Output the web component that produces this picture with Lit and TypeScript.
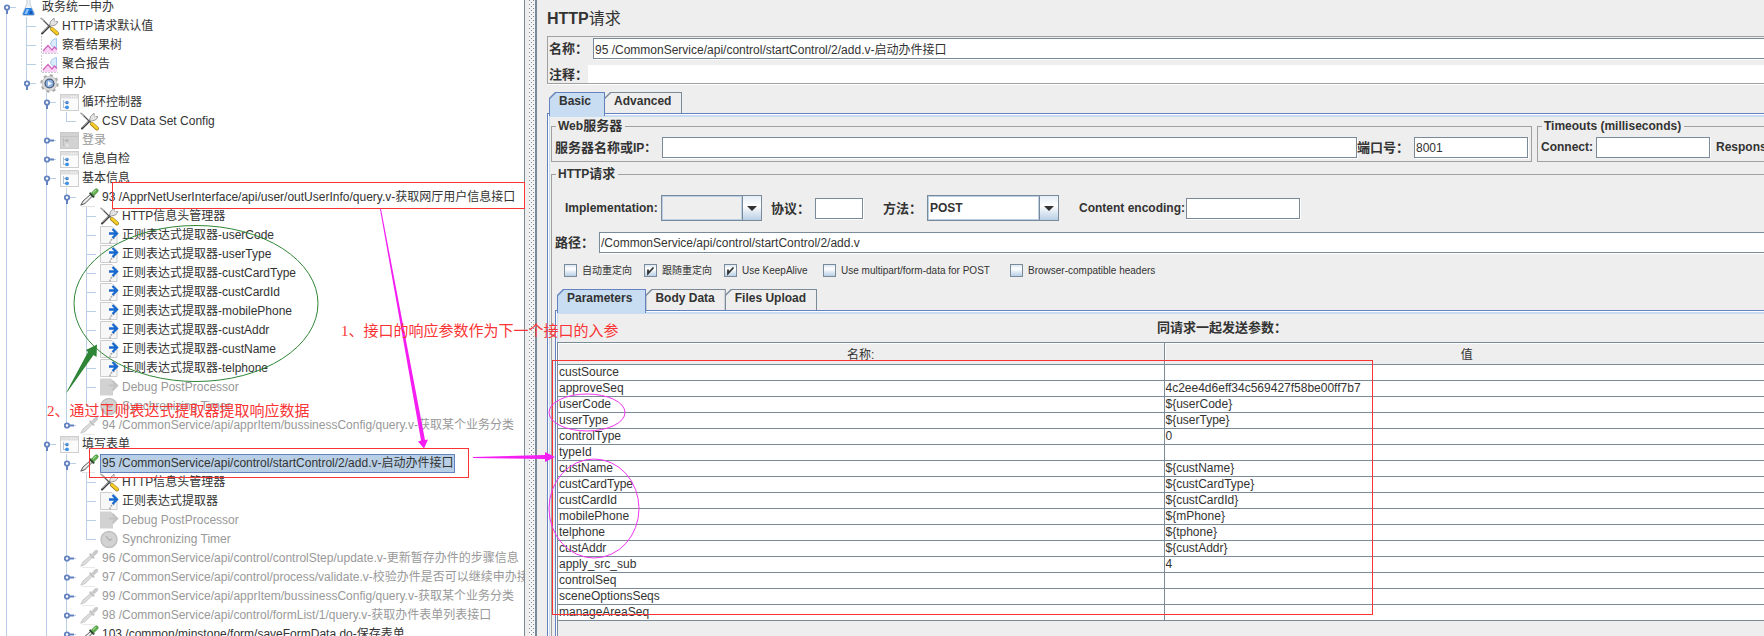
import { LitElement, html, css, svg, nothing } from "lit";
import { customElement, property, state } from "lit/decorators.js";
import { classMap } from "lit/directives/class-map.js";

type IconName = "flask" | "tools" | "graph" | "gear" | "controller" | "dropper" | "extract" | "timer";

interface Node {
  level: number;
  icon: IconName;
  text: string;
  open?: boolean;
  off?: boolean;
  last?: boolean;
  selected?: boolean;
}

const EXTRACT = "正则表达式提取器";

const NODES: Node[] = [
  { level: 0, icon: "flask", text: "政务统一申办", open: true },
  { level: 1, icon: "tools", text: "HTTP请求默认值" },
  { level: 1, icon: "graph", text: "察看结果树" },
  { level: 1, icon: "graph", text: "聚合报告" },
  { level: 1, icon: "gear", text: "申办", open: true, last: true },
  { level: 2, icon: "controller", text: "循环控制器", open: true },
  { level: 3, icon: "tools", text: "CSV Data Set Config", last: true },
  { level: 2, icon: "controller", text: "登录", open: false, off: true },
  { level: 2, icon: "controller", text: "信息自检", open: false },
  { level: 2, icon: "controller", text: "基本信息", open: true },
  { level: 3, icon: "dropper", text: "93 /ApprNetUserInterface/api/user/outUserInfo/query.v-获取网厅用户信息接口", open: true },
  { level: 4, icon: "tools", text: "HTTP信息头管理器" },
  ...["userCode", "userType", "custCardType", "custCardId", "mobilePhone", "custAddr", "custName", "telphone"].map(
    (n): Node => ({ level: 4, icon: "extract", text: `${EXTRACT}-${n}` }),
  ),
  { level: 4, icon: "extract", text: "Debug PostProcessor", off: true },
  { level: 4, icon: "timer", text: "Synchronizing Timer", off: true, last: true },
  { level: 3, icon: "dropper", text: "94 /CommonService/api/apprItem/bussinessConfig/query.v-获取某个业务分类", open: false, off: true, last: true },
  { level: 2, icon: "controller", text: "填写表单", open: true },
  { level: 3, icon: "dropper", text: "95 /CommonService/api/control/startControl/2/add.v-启动办件接口", open: true, selected: true },
  { level: 4, icon: "tools", text: "HTTP信息头管理器" },
  { level: 4, icon: "extract", text: EXTRACT },
  { level: 4, icon: "extract", text: "Debug PostProcessor", off: true },
  { level: 4, icon: "timer", text: "Synchronizing Timer", off: true, last: true },
  { level: 3, icon: "dropper", text: "96 /CommonService/api/control/controlStep/update.v-更新暂存办件的步骤信息", open: false, off: true },
  { level: 3, icon: "dropper", text: "97 /CommonService/api/control/process/validate.v-校验办件是否可以继续申办接口", open: false, off: true },
  { level: 3, icon: "dropper", text: "99 /CommonService/api/apprItem/bussinessConfig/query.v-获取某个业务分类", open: false, off: true },
  { level: 3, icon: "dropper", text: "98 /CommonService/api/control/formList/1/query.v-获取办件表单列表接口", open: false, off: true },
  { level: 3, icon: "dropper", text: "103 /common/minstone/form/saveFormData.do-保存表单", open: false },
];

const PARAMS: [string, string][] = [
  ["custSource", ""],
  ["approveSeq", "4c2ee4d6eff34c569427f58be00ff7b7"],
  ["userCode", "${userCode}"],
  ["userType", "${userType}"],
  ["controlType", "0"],
  ["typeId", ""],
  ["custName", "${custName}"],
  ["custCardType", "${custCardType}"],
  ["custCardId", "${custCardId}"],
  ["mobilePhone", "${mPhone}"],
  ["telphone", "${tphone}"],
  ["custAddr", "${custAddr}"],
  ["apply_src_sub", "4"],
  ["controlSeq", ""],
  ["sceneOptionsSeqs", ""],
  ["manageAreaSeq", ""],
];

const ICONS: Record<IconName, unknown> = {
  flask: svg`
    <path d="M6 0h5v1H10V6l4.500 9.500q.5 2-1.500 2H4q-2 0-1.500-2L7 6V1H6z" fill="#eef3f8" stroke="#b9c2cc" stroke-width=".8"/>
    <path d="M5.500 10h6l2.500 5.500q.3 1.500-1 1.500H4q-1.300 0-1-1.500z" fill="#2a7fe0"/>
    <path d="M6.500 11h2.500l-2 5H4.500z" fill="#8ec4fa"/>
    <circle cx="11" cy="14.500" r="1.500" fill="#1353b0"/>`,
  tools: svg`
    <path d="M2 16.500 10 8.500" stroke="#3a3a3a" stroke-width="2" stroke-linecap="round"/>
    <path d="M2.500 15.500 10 8" stroke="#a8a8a8" stroke-width=".8"/>
    <path d="M9.500 9 10.500 4.500 14 1.200l.5 3 3.500.6-2.500 3.200-4 1z" fill="#e4e4e4" stroke="#777" stroke-width=".7"/>
    <path d="M14.800 4.200 18 1" stroke="#fff" stroke-width="1.400"/>
    <path d="M3 3 10.500 10.500" stroke="#555" stroke-width="1.300"/>
    <path d="M.5.800 4.500 4" stroke="#a5a5a5" stroke-width="1.600"/>
    <path d="M12 12 17 16.500" stroke="#9a7a10" stroke-width="3.800" stroke-linecap="round"/>
    <path d="M12 11.800 17 16.300" stroke="#f7cd2a" stroke-width="2.600" stroke-linecap="round"/>`,
  graph: svg`
    <path d="M3 15 8 9.500l4 4.500 2.500-3.500 2.500 3V17H3z" fill="#f9d3f3"/>
    <path d="M10.500 8q.5-4.500 6-5.500V12q-5-.5-6-4z" fill="#dcebfb" stroke="#8fbbe8" stroke-width=".8"/>
    <path d="M3 15 8 9.500l4 4.500 2.500-3 2.500 2.500" fill="none" stroke="#cf63bf" stroke-width="1.200"/>
    <path d="M1.500 0v17.500H18" fill="none" stroke="#c9c9d2" stroke-dasharray="2 1"/>`,
  gear: svg`
    <circle cx="9.500" cy="9.500" r="8" fill="none" stroke="#a9a9a9" stroke-width="2.400" stroke-dasharray="3.140 3.143"/>
    <circle cx="9.500" cy="9.500" r="7.300" fill="#dedede" stroke="#b4b4b4" stroke-width=".7"/>
    <circle cx="9.500" cy="9.500" r="4.400" fill="#8fb2dd" stroke="#4a5f80" stroke-width="1.400"/>
    <path d="M8 7v5l4-2.500z" fill="#f4f9ff"/>`,
  controller: svg`
    <rect x=".5" y="1.500" width="18" height="16" fill="#fbfbfb" stroke="#cfcfcf"/>
    <rect x="1" y="2" width="17" height="3.500" fill="#dfdfdf"/>
    <path d="M11 3.500h6" stroke="#f8f8f8" stroke-dasharray="1 1"/>
    <path d="M3.500 7v8M3.500 9.500h3M3.500 14.500h3" fill="none" stroke="#b1c2d3"/>
    <circle cx="7" cy="9.500" r="1.700" fill="#2f72bd"/><circle cx="7" cy="14.300" r="1.900" fill="#3b92e8"/>
    <path d="M5.500 9h3" stroke="#8cc1f5"/>`,
  dropper: svg`
    <path d="M2 18.500h13" stroke="#e2e2e2"/>
    <path d="M.8 17.200 3 13l7.500-6.500 1.800 1.800L5 15.500z" fill="#dedede" stroke="#5a5a5a" stroke-linejoin="round"/>
    <path d="M3.500 14.500 10.500 8" stroke="#fafafa"/>
    <path d="M10.300 5.500 13.500 8.700" stroke="#2e4a2e" stroke-width="2.200" stroke-linecap="round"/>
    <path d="M11.500 5 15 1.300q1.700-1 2.700 0t0 2.700L14 7.500z" fill="#62b052" stroke="#3c8a34" stroke-width=".7"/>
    <path d="M13 4.700 16 2" stroke="#b0e4a2"/>`,
  extract: svg`
    <path d="M.5 .5H12l5 5v12H.5z" fill="#f7f7f7" stroke="#cdcdcd"/>
    <path d="M10 17.500q0-4 4.500-5.500" fill="none" stroke="#aaa" stroke-width="1.600" stroke-dasharray="2 1"/>
    <path d="M9 7.500h8M12.500 3l4.500 4.500-4.500 4.500" fill="none" stroke="#1769cf" stroke-width="2.300"/>`,
  timer: svg`
    <circle cx="9" cy="9.500" r="8" fill="#f1f1f1" stroke="#888" stroke-width="1.200"/>
    <path d="M6 6 9.500 10.500 12 9" fill="none" stroke="#555" stroke-width="1.200"/>`,
};

const DISABLED: Partial<Record<IconName, unknown>> = {
  extract: svg`<path d="M0 .5h11l2 2 5.500 5-5.500 6v4H0z" fill="#d2d2d2"/><path d="M9 7.500h8M12.500 3l4.500 4.500-4.500 4.500" fill="none" stroke="#c2c2c2" stroke-width="2"/>`,
  controller: svg`
    <rect x=".5" y="1.500" width="18" height="16" fill="#d2d2d2" stroke="#c9c9c9"/>
    <path d="M1 5.500h17" stroke="#c4c4c4"/>
    <path d="M3.500 7v8M3.500 9.500h3M3.500 14.500h3" fill="none" stroke="#bcbcbc"/>
    <circle cx="7" cy="9.500" r="1.500" fill="#b6b6b6"/><circle cx="7" cy="14.300" r="1.700" fill="#e2e2e2"/>`,
  timer: svg`
    <circle cx="9" cy="9.500" r="8" fill="#d2d2d2" stroke="#c0c0c0" stroke-width="1.500"/>
    <path d="M6 6 9.500 10.500 12 9" fill="none" stroke="#adadad" stroke-width="1.200"/>`,
  dropper: svg`
    <path d="M2 18.500h13" stroke="#eaeaea"/>
    <path d="M.8 17.200 3 13l7.500-6.500 1.800 1.800L5 15.500z" fill="#dcdcdc" stroke="#c8c8c8" stroke-linejoin="round"/>
    <path d="M10.300 5.500 13.500 8.700" stroke="#c2c2c2" stroke-width="2.200" stroke-linecap="round"/>
    <path d="M11.500 5 15 1.300q1.700-1 2.700 0t0 2.700L14 7.500z" fill="#cacaca"/>`,
};

@customElement("plan-tree")
class PlanTree extends LitElement {
  static styles = css`
    :host { display: block; overflow: hidden; background: #fff; }
    .tree { margin: -2px 0 0; padding: 0; list-style: none; }
    .row { display: flex; height: 19px; align-items: center; white-space: nowrap; }
    .cell { flex: none; width: 20px; height: 19px; display: block; }
    .label { flex: none; height: 17px; line-height: 17px; padding: 0 1px 0 1px; border: 1px solid transparent; color: #333; }
    .off { color: #999; }
    .selected { background: #b8cfe5; border-color: #6382bf; }
  `;

  private connector(node: Node, index: number) {
    const leaf = node.open === undefined;
    const top = index === 0 ? 9 : 0;
    const bottom = node.last ? 10 : 19;
    return html`<svg class="cell" viewBox="0 0 20 19" aria-hidden="true">
      <rect x="6" y=${top} width="1" height=${bottom - top} fill="#b8cfe5"></rect>
      <rect x="6" y="9" width="10" height="1" fill="#b8cfe5"></rect>
      ${leaf
        ? nothing
        : svg`<circle cx="7" cy="9.500" r="2.200" fill="#fff" stroke="#6382bf" stroke-width="1.800"/>
            ${node.open
              ? svg`<rect x="6" y="12" width="2" height="4" fill="#6382bf"/>`
              : svg`<rect x="9" y="8.500" width="5" height="2" fill="#6382bf"/>`}`}
    </svg>`;
  }

  render() {
    const running: boolean[] = [];
    return html`<ul class="tree" role="tree">
      ${NODES.map((node, index) => {
        running[node.level] = !node.last;
        return html`<li class="row" role="treeitem" aria-level=${node.level + 1}>
          ${running.slice(0, node.level).map(
            (on) => html`<svg class="cell" viewBox="0 0 20 19" aria-hidden="true">
              ${on ? svg`<rect x="6" width="1" height="19" fill="#b8cfe5"/>` : nothing}
            </svg>`,
          )}
          ${this.connector(node, index)}
          <svg class="cell" viewBox="0 0 20 19" aria-hidden="true">
            ${(node.off && DISABLED[node.icon]) || ICONS[node.icon]}
          </svg>
          <span class=${classMap({ label: true, off: !!node.off, selected: !!node.selected })}>${node.text}</span>
        </li>`;
      })}
    </ul>`;
  }
}

@customElement("tab-strip")
class TabStrip extends LitElement {
  @property({ attribute: false }) tabs: string[] = [];
  @state() private active = 0;

  static styles = css`
    :host { display: block; }
    .strip { display: flex; padding-left: 2px; height: 21px; }
    .tab {
      position: relative; z-index: 0; height: 21px; margin: 0 -1px 0 0; padding: 0 11px 2px 10px; border: 0;
      background: #7a8a99; color: #333; font: bold 12px/19px "Liberation Sans", "Noto Sans CJK SC", sans-serif;
      clip-path: polygon(6px 0, 100% 0, 100% 100%, 0 100%, 0 6px);
    }
    .tab::before {
      content: ""; position: absolute; z-index: -1; inset: 1px 1px 0 1px; background: #eee;
      clip-path: polygon(6px 0, 100% 0, 100% 100%, 0 100%, 0 6px);
    }
    .active { z-index: 1; height: 24px; padding-right: 14px; padding-bottom: 5px; background: #6382bf; }
    .active::before { background: #c8ddf2; }
  `;

  render() {
    return html`<div class="strip" role="tablist">
      ${this.tabs.map(
        (tab, i) => html`<button
          class=${classMap({ tab: true, active: i === this.active })}
          role="tab"
          aria-selected=${i === this.active}
          @click=${() => (this.active = i)}
        >${tab}</button>`,
      )}
    </div>`;
  }
}

@customElement("request-form")
class RequestForm extends LitElement {
  static styles = css`
    :host { display: block; overflow: hidden; background: #eee; color: #333; }
    * { box-sizing: border-box; }
    .page { display: flex; flex-direction: column; height: calc(100% + 12px); margin: 0 -8px 0 10px; }
    .title { margin: 0; padding-top: 2px; font-size: 16px; line-height: 34px; font-weight: bold; }
    .title .cjk { font-weight: 400; font-size: 16px; }
    .names { border: 1px solid #a0a0a0; padding: 1px 0 0 1px; box-shadow: 0 1px #fff; }
    .line { display: flex; align-items: center; }
    .names .line + .line { margin-top: 6px; }
    label, legend, .caption { font-weight: bold; white-space: nowrap; }
    .cjk { font-size: 13px; }
    label { flex: none; line-height: 17px; }
    input, select, .combo { font: 12px "Liberation Sans", "Noto Sans CJK SC", sans-serif; color: #333; border-radius: 0; margin: 0; }
    .box { flex: none; height: 21px; min-width: 0; padding: 0 1px; border: 1px solid #7a8a99; background: #fff; outline: 0; box-shadow: 1px 1px #fff; }
    .plain { height: 18px; border: 0; box-shadow: none; }
    .grow { flex: 1; }
    .w39 { width: 39px; }
    .w44 { width: 44px; }
    .w55 { width: 55px; }
    .w57 { width: 57px; }
    .w96 { width: 96px; }
    .w107 { width: 107px; }
    .short { width: 48px; }
    .medium { width: 114px; }
    .tabs { margin-top: 8px; }
    .panel {
      flex: 1; display: flex; flex-direction: column; min-height: 0; border: 1px solid #6382bf; padding: 5px 0 0 3px;
      box-shadow: inset 1px 1px #fff, inset 2px 3px #c8ddf2;
    }
    fieldset { min-width: 0; margin: 0; border: 1px solid #a0a0a0; padding: 4px 3px 3px 3px; }
    legend { height: 14px; line-height: 14px; margin-left: 1px; padding: 0 3px 0 2px; }
    .servers { display: flex; gap: 5px; }
    .timeouts { flex: 0 0 234px; }
    .timeouts .line { overflow: hidden; }
    .after { margin-left: 6px; }
    .http { flex: 1; display: flex; flex-direction: column; margin-top: 5px; padding: 14px 0 0 3px; min-height: 0; }
    .options { padding-left: 10px; }
    .gap8 { margin-left: 9px; }
    .gap20 { margin-left: 20px; }
    .combo { display: flex; width: 101px; height: 26px; border: 1px solid #7a8a99; }
    .method { width: 132px; }
    .combo select { flex: 1; min-width: 0; appearance: none; padding: 0 1px; border: 1px solid #b8cfe5; background: #eee; font-weight: bold; outline: 0; }
    .method select { background: #fff; }
    .arrow { display: flex; align-items: center; justify-content: center; width: 19px; border-left: 1px solid #7a8a99; background: linear-gradient(#e4edf7, #fff 40%, #b8cfe5); }
    .path { margin-top: 11px; }
    .checks { margin: 11px 0 12px; padding-left: 9px; height: 13px; }
    .check { display: flex; align-items: center; gap: 5px; font-weight: 400; font-size: 10px; line-height: 13px; }
    .check input {
      appearance: none; width: 13px; height: 13px; border: 1px solid #7a8a99;
      background: linear-gradient(#dbe7f3, #fff 35%, #b8cfe5);
    }
    .check input:checked {
      background: url("data:image/svg+xml,%3Csvg xmlns='http://www.w3.org/2000/svg' viewBox='0 0 11 11'%3E%3Cpath d='M3 4.500v4L8.500 2.500' fill='none' stroke='%23333' stroke-width='1.800'/%3E%3C/svg%3E"),
        linear-gradient(#dbe7f3, #fff 35%, #b8cfe5);
    }
    .c80 { width: 80px; }
    .c99 { width: 99px; }
    .c187 { width: 187px; }
    .inner { padding: 3px 0 0 1px; }
    .caption { height: 28px; line-height: 28px; padding-left: 118px; text-align: center; }
    .grid { flex: 1; border-left: 1px solid #7a8a99; }
    table { width: 100%; table-layout: fixed; border-collapse: separate; border-spacing: 0; border-top: 1px solid #7a8a99; background: #fff; }
    th { height: 22px; padding: 0; font-weight: 400; background: #eee; box-shadow: inset 1px 1px #fff; border-bottom: 1px solid #7a8a99; }
    td { height: 16px; padding: 0 1px; line-height: 15px; border-bottom: 1px solid #7a8a99; white-space: nowrap; }
    th + th, td + td { border-left: 1px solid #7a8a99; }
  `;

  private check(id: string, text: string, on: boolean, size: string) {
    return html`<label class="check ${size}" for=${id}><input type="checkbox" id=${id} .checked=${on} />${text}</label>`;
  }

  private arrow() {
    return html`<span class="arrow"><svg width="10" height="5" aria-hidden="true"><path d="M0 0h10L5 5z" fill="#333"></path></svg></span>`;
  }

  render() {
    return html`<div class="page">
      <h1 class="title">HTTP<span class="cjk">请求</span></h1>
      <div class="names">
        <div class="line">
          <label class="cjk w44" for="name">名称：</label>
          <input class="box grow" id="name" .value=${"95 /CommonService/api/control/startControl/2/add.v-启动办件接口"} />
        </div>
        <div class="line">
          <label class="cjk w39" for="note">注释：</label>
          <input class="box plain grow" id="note" />
        </div>
      </div>
      <tab-strip class="tabs" .tabs=${["Basic", "Advanced"]}></tab-strip>
      <div class="panel">
        <div class="servers">
          <fieldset class="grow">
            <legend>Web<span class="cjk">服务器</span></legend>
            <div class="line">
              <label class="w107" for="host"><span class="cjk">服务器名称或</span>IP：</label>
              <input class="box grow" id="host" />
              <label class="cjk w57" for="port">端口号：</label>
              <input class="box medium" id="port" .value=${"8001"} />
            </div>
          </fieldset>
          <fieldset class="timeouts">
            <legend>Timeouts (milliseconds)</legend>
            <div class="line">
              <label class="w55" for="connect">Connect:</label>
              <input class="box medium" id="connect" />
              <span class="after"><label>Response:</label></span>
            </div>
          </fieldset>
        </div>
        <fieldset class="http">
          <legend>HTTP<span class="cjk">请求</span></legend>
          <div class="line options">
            <label class="w96" for="impl">Implementation:</label>
            <div class="combo"><select id="impl"><option></option></select>${this.arrow()}</div>
            <label class="cjk w44 gap8" for="protocol">协议：</label>
            <input class="box short" id="protocol" />
            <label class="cjk w44 gap20" for="method">方法：</label>
            <div class="combo method"><select id="method"><option>POST</option></select>${this.arrow()}</div>
            <label class="w107 gap20" for="encoding">Content encoding:</label>
            <input class="box medium" id="encoding" />
          </div>
          <div class="line path">
            <label class="cjk w44" for="path">路径：</label>
            <input class="box grow" id="path" .value=${"/CommonService/api/control/startControl/2/add.v"} />
          </div>
          <div class="line checks">
            ${this.check("auto", "自动重定向", false, "c80")}
            ${this.check("follow", "跟随重定向", true, "c80")}
            ${this.check("keep", "Use KeepAlive", true, "c99")}
            ${this.check("multi", "Use multipart/form-data for POST", false, "c187")}
            ${this.check("compat", "Browser-compatible headers", false, "")}
          </div>
          <tab-strip .tabs=${["Parameters", "Body Data", "Files Upload"]}></tab-strip>
          <div class="panel inner">
            <div class="caption cjk">同请求一起发送参数：</div>
            <div class="grid">
              <table>
                <thead><tr><th>名称:</th><th>值</th></tr></thead>
                <tbody>
                  ${PARAMS.map(([name, value]) => html`<tr><td>${name}</td><td>${value}</td></tr>`)}
                </tbody>
              </table>
            </div>
          </div>
        </fieldset>
      </div>
    </div>`;
  }
}

@customElement("app-root")
class AppRoot extends LitElement {
  static styles = css`
    :host {
      display: flex; position: relative; height: 100vh; overflow: hidden; background: #eee;
      font: 12px "Liberation Sans", "Noto Sans CJK SC", sans-serif;
    }
    plan-tree { flex: 0 0 524px; border-right: 1px solid #7a8a99; }
    .divider {
      flex: 0 0 12px; box-sizing: border-box; border-right: 2px solid #7a8a99; border-left: 4px solid #eee;
      background: #f4f4f4 url("data:image/svg+xml,%3Csvg xmlns='http://www.w3.org/2000/svg' width='4' height='4' shape-rendering='crispEdges'%3E%3Cpath d='M0 0h1v1H0zM2 2h1v1H2z' fill='%237a8a99'/%3E%3C/svg%3E");
    }
    request-form { flex: 1; min-width: 0; }
    .marks { position: absolute; inset: 0; width: 100%; height: 100%; pointer-events: none; }
    .red { fill: none; stroke: #fa3434; }
    .green { fill: none; stroke: #2e8535; }
    .pink { fill: none; stroke: #f035ee; }
    .note { fill: #fa3434; font: 15px "Liberation Serif", "Noto Sans CJK SC", serif; }
  `;

  render() {
    return html`
      <plan-tree></plan-tree>
      <div class="divider"></div>
      <request-form></request-form>
      <svg class="marks">
        <rect class="red" x="112.500" y="182.500" width="412" height="26"></rect>
        <rect class="red" x="89.500" y="448.500" width="379" height="29"></rect>
        <rect class="red" x="552.500" y="360.500" width="820" height="254"></rect>
        <ellipse class="green" cx="196" cy="303.500" rx="122" ry="78"></ellipse>
        <path d="M66 393 88 352 86 350 97 344.500 96.500 357 93.500 355 68 391z" fill="#2e8535"></path>
        <ellipse class="pink" cx="587" cy="412.500" rx="38" ry="18.500"></ellipse>
        <ellipse class="pink" cx="594" cy="508.500" rx="45" ry="49.500"></ellipse>
        <path d="M380 209 381 209 425 440 428 439.500 424 448.500 418 441.500 421 440.500z" fill="#f41df2"></path>
        <path d="M473 457 545 455V452L555 457 545 462V459L473 458z" fill="#f41df2"></path>
        <text class="note" x="341" y="336">1、接口的响应参数作为下一个接口的入参</text>
        <text class="note" x="47" y="416">2、通过正则表达式提取器提取响应数据</text>
      </svg>
    `;
  }
}
